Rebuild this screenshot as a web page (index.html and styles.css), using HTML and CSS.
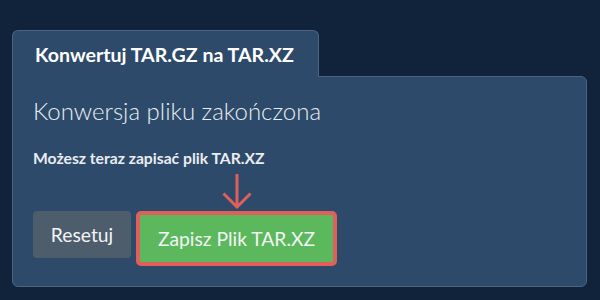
FILE: index.html
```html
<!DOCTYPE html>
<html lang="pl">
<head>
<meta charset="utf-8">
<link rel="stylesheet" href="styles.css">
</head>
<body>
<div class="wrap">
  <div class="tab">Konwertuj TAR.GZ na TAR.XZ</div>
  <div class="card">
    <h2 class="title">Konwersja pliku zakończona</h2>
    <p class="note">Możesz teraz zapisać plik TAR.XZ</p>
    <div class="actions">
      <button class="btn btn-reset">Resetuj</button>
      <div class="save-col">
        <svg class="arrow" width="30" height="36" viewBox="0 0 30 36">
          <path d="M15 1 V34 M1.5 20.5 L15 34 L28.5 20.5" fill="none" stroke="#df5f5a" stroke-width="3"/>
        </svg>
        <button class="btn btn-save">Zapisz Plik TAR.XZ</button>
      </div>
    </div>
  </div>
</div>
</body>
</html>
```
FILE: styles.css
```css
html, body {
  margin: 0;
  padding: 0;
  background: #10233a;
  width: 600px;
  height: 300px;
  overflow: hidden;
}
.wrap {
  padding: 30px 13px 0 12px;
  font-family: Lato, "Open Sans", sans-serif;
}
.tab {
  position: relative;
  z-index: 1;
  width: 262px;
  white-space: nowrap;
  padding: 12px 21px 10px 22px;
  background: #2d4a6a;
  border: 1px solid #4a6482;
  border-bottom: none;
  border-radius: 6px 6px 0 0;
  margin-bottom: -1px;
  color: #ffffff;
  font-weight: 700;
  font-size: 19.6px;
  line-height: 24px;
}
.card {
  background: #2d4a6a;
  border: 1px solid #4a6482;
  border-radius: 0 6px 6px 6px;
  padding: 19px 20px 20px 20px;
}
.title {
  margin: 0;
  font-weight: 300;
  font-size: 24px;
  line-height: 29px;
  color: #e9edf1;
}
.note {
  margin: 24px 0 0 0;
  font-weight: 700;
  font-size: 15.7px;
  line-height: 18px;
  color: #e9edf1;
}
.actions {
  display: flex;
  align-items: flex-end;
  gap: 5px;
  margin-top: 6px;
}
.save-col {
  display: flex;
  flex-direction: column;
  align-items: center;
}
.arrow {
  display: block;
  margin-bottom: 2px;
}
.btn {
  font-family: Lato, "Open Sans", sans-serif;
  font-size: 19.3px;
  font-weight: 400;
  color: #f2f4f6;
  border: none;
  margin: 0;
  padding: 0;
  height: 47px;
  line-height: 47px;
}
.btn-reset {
  background: #4e5d6c;
  border-radius: 4px;
  width: 98px;
  margin-bottom: 8px;
}
.btn-save {
  background: #5cb85c;
  border: 4px solid #df5f5a;
  border-radius: 5px;
  height: 55px;
  line-height: 47px;
  width: 201px;
}
```
